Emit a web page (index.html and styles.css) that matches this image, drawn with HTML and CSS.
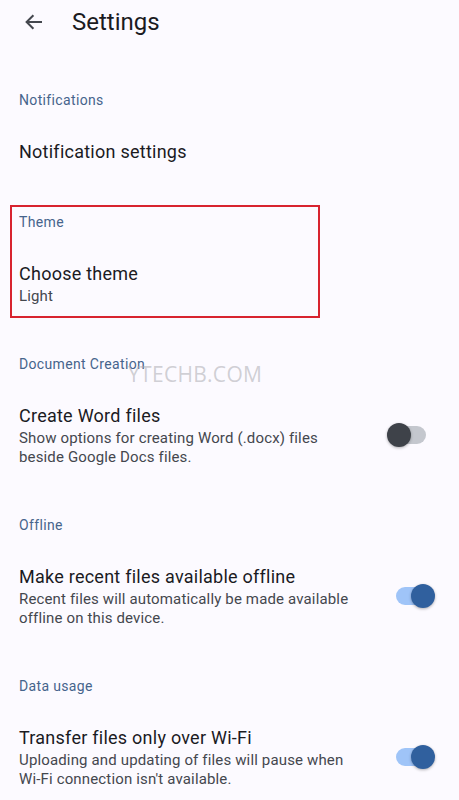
FILE: index.html
```html
<!DOCTYPE html>
<html lang="en">
<head>
<meta charset="utf-8">
<title>Settings</title>
<link rel="stylesheet" href="styles.css">
</head>
<body>
  <header class="app-bar">
    <button class="back" aria-label="Back">
      <svg width="24" height="24" viewBox="0 0 24 24" aria-hidden="true">
        <path d="M20 12H4.8M11.4 5.2L4.6 12l6.8 6.8" fill="none" stroke="#44474e" stroke-width="2"/>
      </svg>
    </button>
    <h1 class="app-title">Settings</h1>
  </header>

  <main class="settings">
    <section class="group">
      <h2 class="group-label">Notifications</h2>
      <div class="item">
        <div class="item-text">
          <div class="item-title">Notification settings</div>
        </div>
      </div>
    </section>

    <section class="group group-marked">
      <h2 class="group-label">Theme</h2>
      <div class="item">
        <div class="item-text">
          <div class="item-title">Choose theme</div>
          <div class="item-sub">Light</div>
        </div>
      </div>
    </section>

    <section class="group">
      <h2 class="group-label">Document Creation</h2>
      <div class="item">
        <div class="item-text">
          <div class="item-title">Create Word files</div>
          <div class="item-sub">Show options for creating Word (.docx) files beside Google Docs files.</div>
        </div>
        <span class="switch" role="switch" aria-checked="false"><span class="track"></span><span class="thumb"></span></span>
      </div>
    </section>

    <section class="group">
      <h2 class="group-label">Offline</h2>
      <div class="item">
        <div class="item-text">
          <div class="item-title">Make recent files available offline</div>
          <div class="item-sub">Recent files will automatically be made available offline on this device.</div>
        </div>
        <span class="switch on" role="switch" aria-checked="true"><span class="track"></span><span class="thumb"></span></span>
      </div>
    </section>

    <section class="group">
      <h2 class="group-label">Data usage</h2>
      <div class="item">
        <div class="item-text">
          <div class="item-title">Transfer files only over Wi-Fi</div>
          <div class="item-sub">Uploading and updating of files will pause when Wi-Fi connection isn't available.</div>
        </div>
        <span class="switch on" role="switch" aria-checked="true"><span class="track"></span><span class="thumb"></span></span>
      </div>
    </section>
  </main>

  <div class="watermark">YTECHB.COM</div>
</body>
</html>
```

FILE: styles.css
```css
* {
  box-sizing: border-box;
}

html, body {
  margin: 0;
  padding: 0;
}

body {
  position: relative;
  width: 459px;
  height: 800px;
  overflow: hidden;
  background: #fcfaff;
  font-family: Roboto, "Noto Sans", sans-serif;
  color: #1b1b1f;
}

/* top app bar */
.app-bar {
  display: flex;
  align-items: center;
  height: 44px;
  padding-left: 22px;
}

.back {
  display: flex;
  align-items: center;
  justify-content: center;
  width: 24px;
  height: 24px;
  padding: 0;
  border: 0;
  background: none;
}

.app-title {
  margin: 0 0 0 26px;
  font-size: 24px;
  font-weight: 400;
  letter-spacing: 0;
  color: #1b1b1f;
}

.settings {
  padding-top: 22px;
}

/* preference groups */
.group {
  position: relative;
}

.group-label {
  margin: 0;
  padding: 24px 19px 0;
  font-size: 14px;
  line-height: 20px;
  font-weight: 400;
  color: #46648c;
  letter-spacing: 0.35px;
}

.group-marked::after {
  content: "";
  position: absolute;
  left: 10px;
  top: 17px;
  width: 306px;
  bottom: 12px;
  border: 2px solid #d8232f;
  pointer-events: none;
}

.item {
  display: flex;
  align-items: center;
  gap: 26px;
  padding: 30px 24px 24px 19px;
}

.item-text {
  flex: 1;
  min-width: 0;
}

.item-title {
  font-size: 18px;
  line-height: 24px;
  letter-spacing: 0.25px;
  color: #1b1b1f;
}

.item-sub {
  margin-top: 1px;
  font-size: 15px;
  line-height: 19px;
  letter-spacing: 0.15px;
  color: #44474e;
}

/* switch */
.switch {
  position: relative;
  flex: none;
  width: 48px;
  height: 24px;
  margin-top: -2px;
}

.switch .track {
  position: absolute;
  left: 9px;
  top: 3px;
  width: 30px;
  height: 18px;
  border-radius: 9px;
  background: #c4c7ce;
}

.switch .thumb {
  position: absolute;
  left: 0;
  top: 0;
  width: 24px;
  height: 24px;
  border-radius: 50%;
  background: #3e4249;
  box-shadow: 0 1px 3px rgba(0, 0, 0, 0.3);
}

.switch.on .track {
  background: #9fc4f8;
}

.switch.on .thumb {
  left: 24px;
  background: #30609e;
}

/* site watermark over the page */
.watermark {
  position: absolute;
  left: 128px;
  top: 360px;
  font-family: "Open Sans", sans-serif;
  font-size: 21px;
  line-height: 28px;
  color: rgba(170, 170, 176, 0.55);
  letter-spacing: 0.3px;
  pointer-events: none;
}
```
